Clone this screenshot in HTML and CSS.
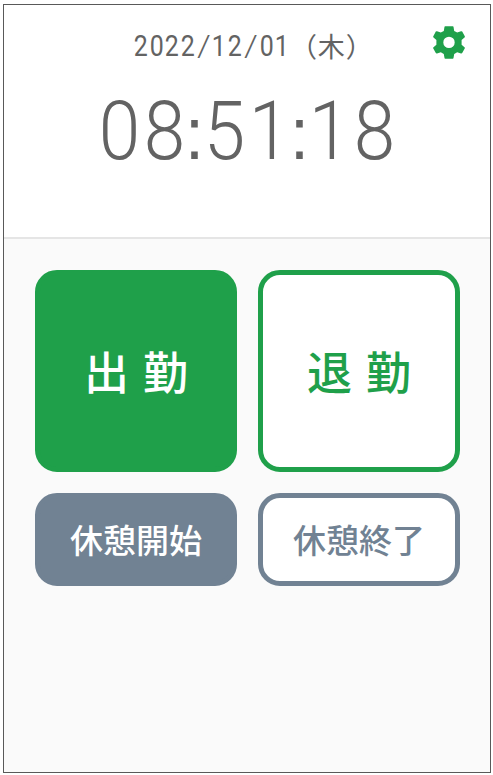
FILE: index.html
```html
<!DOCTYPE html>
<html lang="ja">
<head>
<meta charset="utf-8">
<title>打刻</title>
<link rel="stylesheet" href="styles.css">
</head>
<body>
<main class="app">
  <header class="clock">
    <div class="date"><span>2</span><span>0</span><span>2</span><span>2</span><span class="slash">/</span><span>1</span><span>2</span><span class="slash">/</span><span>0</span><span>1</span><b class="day">（木）</b></div>
    <div class="time"><span>0</span><span>8</span><i>:</i><span>5</span><span>1</span><i>:</i><span>1</span><span>8</span></div>
    <button class="settings" aria-label="設定">
      <svg viewBox="0 0 32 33"><path fill-rule="evenodd" d="M11.500.700Q11.600.200 12.200.200H19.800Q20.400.200 20.500.800L21.200 4.900L24.200 6.600L28 5.200Q28.800 5 29.200 5.600L31.800 10.300Q32.100 11 31.500 11.500L28.600 14.100V18.700L31.500 21.300Q32.100 21.800 31.700 22.500L29.200 27.100Q28.800 27.700 28 27.500L24.200 26.200L21.200 27.900L20.500 32.100Q20.400 32.700 19.800 32.700H12.200Q11.600 32.700 11.500 32.100L10.800 27.900L7.800 26.200L4 27.500Q3.200 27.700 2.800 27.100L.300 22.500Q-.100 21.800.500 21.300L3.400 18.700V14.100L.500 11.500Q-.100 11 .300 10.300L2.800 5.600Q3.200 5 4 5.200L7.800 6.600L10.800 4.900ZM16 10.700A5.700 5.700 0 1 0 16 22.100A5.700 5.700 0 1 0 16 10.700Z"/></svg>
    </button>
  </header>
  <section class="actions">
    <button class="btn main in"><span>出</span><span>勤</span></button>
    <button class="btn main out"><span>退</span><span>勤</span></button>
    <button class="btn sub start">休憩開始</button>
    <button class="btn sub end">休憩終了</button>
  </section>
</main>
</body>
</html>
```
FILE: styles.css
```css
* { box-sizing: border-box; }
body {
  margin: 0;
  padding: 4px 2px 2px 3px;
  height: 775px;
  background: #fff;
  font-family: "Noto Sans CJK JP", sans-serif;
}
.app {
  height: 769px;
  border: 1px solid #595959;
  background: #fafafa;
}
.clock {
  position: relative;
  height: 234px;
  background: #fff;
  border-bottom: 2px solid #e5e5e5;
  color: #636363;
  display: flex;
  flex-direction: column;
  align-items: flex-start;
}
.date {
  display: flex;
  margin: 23px 0 0 129px;
  height: 36px;
  line-height: 36px;
  font-family: Roboto, sans-serif;
  font-size: 29px;
  white-space: nowrap;
}
.date span {
  display: flex;
  justify-content: center;
  width: 15.7px;
  transform: scaleX(.86);
}
.date .slash { font-weight: 300; transform: scaleX(1.2); }
.day {
  font-family: "Noto Sans CJK JP", sans-serif;
  font-size: 27px;
  font-weight: 400;
  letter-spacing: 1px;
}
.time {
  display: flex;
  align-items: baseline;
  margin: 17px 0 0 93px;
  height: 100px;
  line-height: 100px;
  font-family: Roboto, sans-serif;
  font-size: 82px;
  font-weight: 300;
  white-space: nowrap;
}
.time span, .time i {
  display: flex;
  justify-content: center;
  width: 45px;
  font-style: normal;
  transform: scaleX(.91);
}
.time i {
  width: 15px;
  font-family: "Liberation Sans", sans-serif;
  font-size: 75px;
}
button { margin: 0; padding: 0; font-family: inherit; }
.settings {
  position: absolute;
  top: 21px;
  right: 25px;
  width: 32px;
  height: 33px;
  border: 0;
  background: none;
}
.settings svg { display: block; width: 100%; height: 100%; fill: #1fa04a; }
.actions {
  display: grid;
  grid-template-columns: 202px 202px;
  grid-template-rows: 202px 93px;
  gap: 21px;
  padding: 31px 0 0 31px;
}
.btn {
  display: flex;
  align-items: center;
  justify-content: center;
  border-radius: 22px;
  border: 5px solid #1fa04a;
}
.main { gap: 14px; font-size: 45px; font-weight: 500; padding-bottom: 2px; }
.in { background: #1fa04a; color: #fff; }
.out { background: #fff; color: #1fa04a; }
.sub { font-size: 33px; font-weight: 500; border-color: #718293; padding-bottom: 2px; }
.start { background: #718293; color: #fff; }
.end { background: #fff; color: #718293; }
```
